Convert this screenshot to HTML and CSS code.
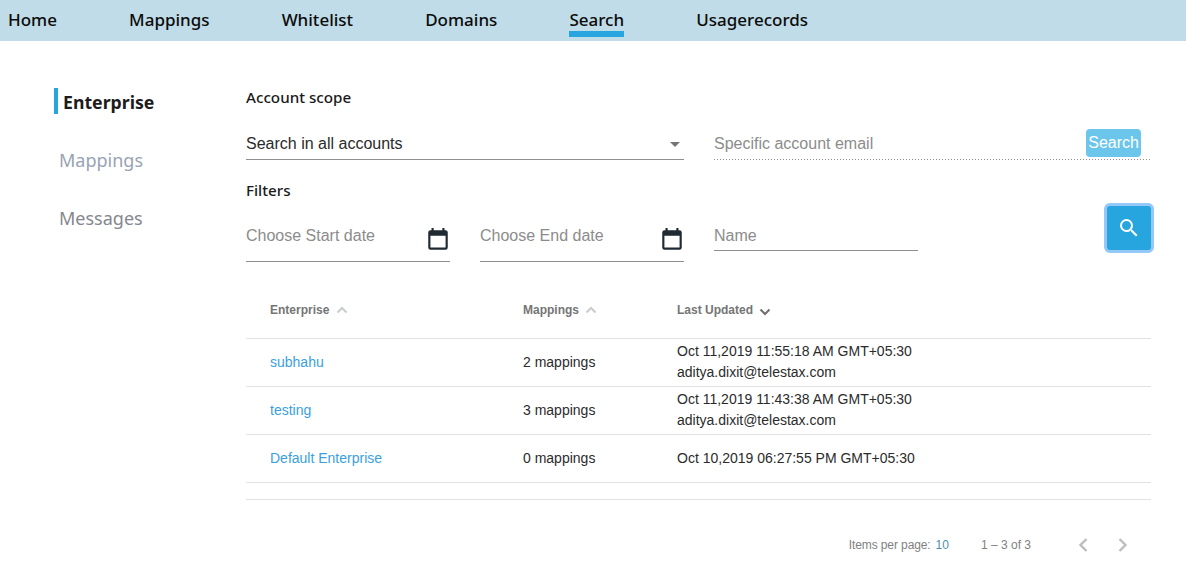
FILE: index.html
```html
<!DOCTYPE html>
<html lang="en">
<head>
  <meta charset="UTF-8" />
  <meta name="viewport" content="width=device-width, initial-scale=1.0" />
  <title>Search</title>
  <link rel="stylesheet" href="styles.css">
</head>
<body>
  <header class="topnav">
    <a class="topnav-link">Home</a>
    <a class="topnav-link">Mappings</a>
    <a class="topnav-link">Whitelist</a>
    <a class="topnav-link">Domains</a>
    <a class="topnav-link active">Search</a>
    <a class="topnav-link">Usagerecords</a>
  </header>

  <div class="page">
    <nav class="sidebar">
      <a class="side-link active">Enterprise</a>
      <a class="side-link light">Mappings</a>
      <a class="side-link">Messages</a>
    </nav>

    <main class="content">
      <h2 class="section-title scope-title">Account scope</h2>
      <div class="scope-row">
        <div class="select-field">
          <span>Search in all accounts</span>
          <span class="caret"></span>
        </div>
        <div class="email-field">
          <span class="placeholder">Specific account email</span>
          <button class="email-search">Search</button>
        </div>
      </div>

      <h2 class="section-title filters-title">Filters</h2>
      <div class="filter-row">
        <div class="date-field">
          <span class="placeholder">Choose Start date</span>
          <svg class="calendar" width="26" height="26" viewBox="0 0 24 24"><path d="M19 3h-1V1h-2v2H8V1H6v2H5a2 2 0 0 0-2 2v14a2 2 0 0 0 2 2h14a2 2 0 0 0 2-2V5a2 2 0 0 0-2-2zm0 16H5V8h14v11z"/></svg>
        </div>
        <div class="date-field">
          <span class="placeholder">Choose End date</span>
          <svg class="calendar" width="26" height="26" viewBox="0 0 24 24"><path d="M19 3h-1V1h-2v2H8V1H6v2H5a2 2 0 0 0-2 2v14a2 2 0 0 0 2 2h14a2 2 0 0 0 2-2V5a2 2 0 0 0-2-2zm0 16H5V8h14v11z"/></svg>
        </div>
        <div class="name-field">
          <span class="placeholder">Name</span>
        </div>
        <button class="search-btn">
          <svg width="24" height="24" viewBox="0 0 24 24" fill="#fff"><path d="M15.5 14h-.79l-.28-.27A6.47 6.47 0 0 0 16 9.5 6.5 6.5 0 1 0 9.5 16c1.61 0 3.09-.59 4.23-1.57l.27.28v.79l5 4.99L20.49 19l-4.99-5zm-6 0C7.01 14 5 11.99 5 9.5S7.01 5 9.5 5 14 7.01 14 9.5 11.99 14 9.5 14z"/></svg>
        </button>
      </div>

      <table class="results">
        <thead>
          <tr>
            <th class="col-name">Enterprise <svg class="sort faded" width="12" height="8" viewBox="0 0 12 8"><path d="M1.5 6.5l4.5-4.5 4.5 4.5" /></svg></th>
            <th class="col-maps">Mappings <svg class="sort faded" width="12" height="8" viewBox="0 0 12 8"><path d="M1.5 6.5l4.5-4.5 4.5 4.5" /></svg></th>
            <th>Last Updated <svg class="sort down" width="12" height="8" viewBox="0 0 12 8"><path d="M1.5 1.5l4.5 4.5 4.5-4.5" /></svg></th>
          </tr>
        </thead>
        <tbody>
          <tr>
            <td class="col-name"><a class="row-link">subhahu</a></td>
            <td class="col-maps">2 mappings</td>
            <td><div class="stamp">Oct 11,2019 11:55:18 AM GMT+05:30</div><div class="stamp">aditya.dixit@telestax.com</div></td>
          </tr>
          <tr>
            <td class="col-name"><a class="row-link">testing</a></td>
            <td class="col-maps">3 mappings</td>
            <td><div class="stamp">Oct 11,2019 11:43:38 AM GMT+05:30</div><div class="stamp">aditya.dixit@telestax.com</div></td>
          </tr>
          <tr>
            <td class="col-name"><a class="row-link">Default Enterprise</a></td>
            <td class="col-maps">0 mappings</td>
            <td>Oct 10,2019 06:27:55 PM GMT+05:30</td>
          </tr>
        </tbody>
      </table>

      <div class="spacer-rule"></div>

      <div class="pager">
        <span class="pager-label">Items per page:</span>
        <span class="pager-size">10</span>
        <span class="pager-range">1 – 3 of 3</span>
        <svg class="pager-arrow prev" width="12" height="16" viewBox="0 0 12 16"><path d="M9.5 2l-6 6 6 6" /></svg>
        <svg class="pager-arrow" width="12" height="16" viewBox="0 0 12 16"><path d="M2.5 2l6 6-6 6" /></svg>
      </div>
    </main>
  </div>
</body>
</html>
```

FILE: styles.css
```css
:root {
  --accent: #27a5de;
  --rule: #e2e2e2;
  --field-line: #8f8f8f;
  --placeholder: #8c8c8c;
  --ink: #2b2b2b;
}

* {
  box-sizing: border-box;
}

body {
  margin: 0;
  background: #fff;
  color: var(--ink);
  font-family: "Liberation Sans", Arial, sans-serif;
  font-size: 16px;
  overflow: hidden;
}

/* top bar */
.topnav {
  display: flex;
  gap: 72.1px;
  height: 41px;
  padding-left: 8px;
  background: #bfdce8;
  font-family: "Noto Sans", sans-serif;
  font-size: 17px;
  font-weight: 500;
  color: #0b0b0b;
}
.topnav-link {
  height: 37px;
  line-height: 39px;
}
.topnav-link.active {
  border-bottom: 6px solid var(--accent);
  height: 37px;
}

/* page layout */
.page {
  display: flex;
  padding: 47px 35px 0 54px;
}
.sidebar {
  display: flex;
  flex-direction: column;
  gap: 32px;
  width: 192px;
  font-family: "Noto Sans", sans-serif;
  font-size: 18px;
}
.side-link {
  height: 26px;
  line-height: 28px;
  padding-left: 5px;
  color: #85878f;
}
.side-link.light {
  color: #98a3b4;
}
.side-link.active {
  border-left: 4px solid var(--accent);
  color: #1c1c1c;
  font-size: 17.7px;
  font-weight: 700;
}
.content {
  flex: 1;
}

.section-title {
  margin: 0;
  font-family: "Noto Sans", sans-serif;
  font-size: 15.2px;
  font-weight: 500;
  color: #1a1a1a;
}
.scope-title {
  margin-top: -1px;
  line-height: 20px;
}
.filters-title {
  margin-top: 20px;
  line-height: 20px;
}

/* form rows */
.scope-row,
.filter-row {
  display: flex;
  gap: 30px;
}
.scope-row {
  margin-top: 16px;
}
.placeholder {
  color: var(--placeholder);
}
.select-field {
  display: flex;
  justify-content: space-between;
  align-items: center;
  width: 438px;
  height: 37px;
  padding: 6px 4px 0 0;
  border-bottom: 1px solid var(--field-line);
  color: #2b2b2b;
}
.caret {
  border-left: 5px solid transparent;
  border-right: 5px solid transparent;
  border-top: 5px solid #757575;
}
.email-field {
  display: flex;
  justify-content: space-between;
  align-items: center;
  flex: 1;
  height: 37px;
  padding: 6px 10px 1px 0;
  background: linear-gradient(to right, var(--field-line) 1px, transparent 1px) left bottom / 3px 1px repeat-x;
}
.email-search {
  height: 28px;
  margin-top: -2px;
  padding: 0 2px;
  border: 0;
  border-radius: 4px;
  background: #6cc5ea;
  color: #fff;
  font: 16px "Liberation Sans", Arial, sans-serif;
}

.filter-row {
  align-items: flex-start;
  margin-top: 12px;
}
.date-field {
  display: flex;
  justify-content: space-between;
  width: 204px;
  height: 50px;
  padding-top: 15px;
  border-bottom: 1px solid var(--field-line);
}
.calendar {
  margin: 0 -1px 0 0;
  fill: #1f2a33;
}
.name-field {
  width: 204px;
  height: 39px;
  padding-top: 15px;
  line-height: 18px;
  border-bottom: 1px solid var(--field-line);
}
.search-btn {
  display: flex;
  align-items: center;
  justify-content: center;
  width: 50px;
  height: 50px;
  margin: -9px -3px 0 auto;
  padding: 0;
  border: 3px solid #93c8f9;
  border-radius: 6px;
  background: var(--accent);
}

/* results table */
.results {
  width: 100%;
  margin-top: 28px;
  border-collapse: collapse;
  font-size: 14px;
  table-layout: fixed;
}
.results th {
  height: 48px;
  padding: 0 0 8px;
  border-bottom: 1px solid var(--rule);
  color: #757575;
  font-size: 12px;
  font-weight: 700;
  text-align: left;
}
.results td {
  height: 48px;
  padding: 0;
  border-bottom: 1px solid var(--rule);
  color: #2b2b2b;
}
.results .col-name {
  width: 277px;
  padding-left: 24px;
}
.results .col-maps {
  width: 154px;
}
.stamp {
  line-height: 21px;
}
.row-link {
  color: #3a9fdf;
}
.sort {
  margin-left: 3px;
  fill: none;
  stroke-width: 2;
}
.sort.faded {
  stroke: #c8cccc;
}
.sort.down {
  stroke: #6f6f6f;
  vertical-align: -2px;
}

.spacer-rule {
  height: 17px;
  border-bottom: 1px solid var(--rule);
}

/* pager */
.pager {
  display: flex;
  align-items: center;
  justify-content: flex-end;
  height: 44px;
  margin-top: 23px;
  padding-right: 22px;
  color: #7f7f7f;
  font-size: 12px;
}
.pager-label {
  letter-spacing: -0.1px;
}
.pager-size {
  margin-left: 5px;
  color: #4f8fb0;
}
.pager-range {
  margin-left: 32px;
}
.pager-arrow {
  margin-left: 28px;
  fill: none;
  stroke: #bdbdbd;
  stroke-width: 2.4;
}
.pager-arrow.prev {
  margin-left: 46px;
}
```
